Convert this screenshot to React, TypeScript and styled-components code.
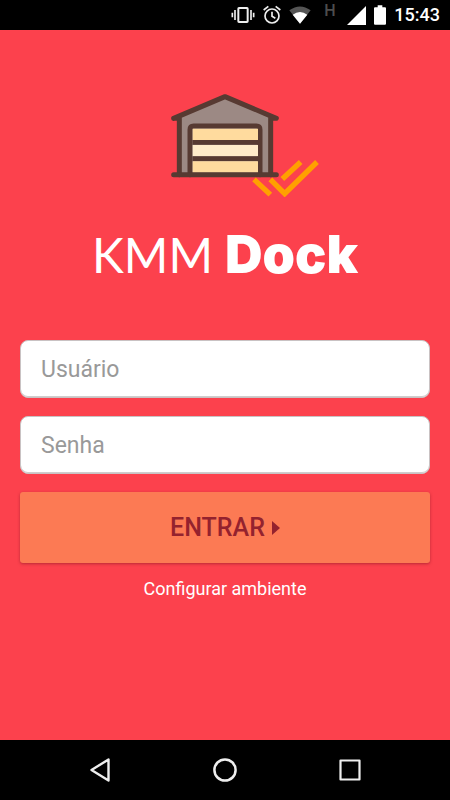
import React from "react";
import styled, { createGlobalStyle } from "styled-components";

const GlobalStyle = createGlobalStyle`
  *, *::before, *::after { box-sizing: border-box; }
  body { margin: 0; background: #fc414d; font-family: Roboto, sans-serif; }
`;

const Screen = styled.div`
  display: flex;
  flex-direction: column;
  min-height: 100vh;
  background: #fc414d;
`;

const StatusBar = styled.header`
  display: flex;
  align-items: center;
  justify-content: flex-end;
  gap: 8px;
  height: 30px;
  padding-right: 10px;
  background: #000;
  color: #fff;
`;

const StatusIcons = styled.div`
  display: flex;
  align-items: center;
  gap: 8px;
`;

const Network = styled.span`
  align-self: flex-start;
  width: 20px;
  padding-left: 5px;
  color: #4d4d4d;
  font-size: 16px;
  font-weight: 500;
  line-height: 22px;
`;

const Clock = styled.time`
  font-size: 18px;
  font-weight: 500;
  line-height: 32px;
`;

const Main = styled.main`
  display: flex;
  flex: 1;
  flex-direction: column;
  align-items: center;
  padding: 62px 20px 20px;
`;

const Brand = styled.div`
  display: flex;
  flex-direction: column;
  align-items: center;
  gap: 28px;
`;

const LogoBox = styled.div`
  padding-left: 40px;
  line-height: 0;
`;

const Title = styled.h1`
  display: flex;
  align-items: baseline;
  gap: 12px;
  height: 60px;
  margin: 0;
  color: #fff;
  font-family: Lato, sans-serif;
  font-size: 48px;
  font-weight: 400;
  line-height: 60px;
`;

const TitleStrong = styled.strong`
  font-family: Inter, sans-serif;
  font-size: 52px;
  font-weight: 900;
`;

const Form = styled.form`
  display: flex;
  flex-direction: column;
  align-items: center;
  gap: 18px;
  width: 100%;
  margin-top: 55px;
`;

const Field = styled.input`
  width: 100%;
  height: 58px;
  padding: 0 20px;
  border: 1px solid #c9c2c3;
  border-radius: 8px;
  background: #fff;
  box-shadow: inset 0 -1px #d0cccc;
  color: #333;
  font-family: Roboto, sans-serif;
  font-size: 23px;
  outline: none;

  &::placeholder {
    color: #999;
    opacity: 1;
  }
`;

const SubmitButton = styled.button`
  display: flex;
  align-items: center;
  justify-content: center;
  gap: 7px;
  width: 100%;
  height: 71px;
  padding: 0;
  border: 0;
  border-radius: 3px;
  background: #fc7a54;
  box-shadow: 0 1px 3px rgba(120, 20, 30, 0.5);
  color: #94222e;
  font-family: Roboto, sans-serif;
  font-size: 25px;
  font-weight: 500;
`;

const ConfigLink = styled.a`
  margin-top: -4px;
  color: #fff;
  font-size: 18px;
  line-height: 24px;
  text-decoration: none;
`;

const NavBar = styled.nav`
  display: flex;
  align-items: center;
  justify-content: center;
  gap: 65px;
  height: 60px;
  background: #000;
`;

const NavButton = styled.button`
  display: flex;
  align-items: center;
  justify-content: center;
  width: 60px;
  height: 60px;
  padding: 0;
  border: 0;
  background: none;
`;

function VibrateIcon() {
  return (
    <svg width="24" height="18" viewBox="0 0 72 54" fill="none" stroke="#eee" strokeWidth="5" aria-hidden="true">
      <rect x="22" y="6" width="28" height="42" rx="2" strokeWidth="6" />
      <path d="M12 12V42M60 12V42M4 20V34M68 20V34" />
    </svg>
  );
}

function AlarmIcon() {
  return (
    <svg width="18" height="20" viewBox="0 0 54 60" fill="none" stroke="#eee" strokeWidth="5" aria-hidden="true">
      <circle cx="27" cy="33" r="21" />
      <path d="M2 15L16 4M52 15L38 4M27 20V34L37 40" />
    </svg>
  );
}

function WifiIcon() {
  return (
    <svg width="22" height="18" viewBox="0 0 66 54" aria-hidden="true">
      <path d="M1 13Q33-10 65 13L33 53Z" fill="#555" />
      <path d="M11 26Q33 10 55 26L33 53Z" fill="#fff" />
    </svg>
  );
}

function SignalIcon() {
  return (
    <svg width="19" height="19" viewBox="0 0 57 57" aria-hidden="true">
      <path d="M57 0V57H0Z" fill="#fff" />
    </svg>
  );
}

function BatteryIcon() {
  return (
    <svg width="12" height="20" viewBox="0 0 36 60" aria-hidden="true">
      <path d="M11 1H25V7H33Q36 7 36 10V56Q36 59 33 59H3Q0 59 0 56V10Q0 7 3 7H11Z" fill="#fff" />
    </svg>
  );
}

function DockLogo() {
  return (
    <svg width="150" height="105" viewBox="30 20 450 315" role="img" aria-label="KMM Dock">
      <path d="M58 97L195 35L332 97V268H58Z" fill="#9c8984" />
      <g fill="none" stroke="#573a32" strokeWidth="15" strokeLinecap="round" strokeLinejoin="round">
        <path d="M41 99L195 34L349 99H332V268M41 99H58V268" />
        <path d="M90 268V133Q90 122 101 122H289Q300 122 300 133V268" />
      </g>
      <path d="M98 130H294V164H98ZM98 228H294V262H98Z" fill="#ffdb9e" />
      <path d="M98 179H294V213H98Z" fill="#ffebc9" />
      <path d="M98 171H294M98 220H294" stroke="#573a32" strokeWidth="14" />
      <path d="M41 268H349" stroke="#573a32" strokeWidth="15" strokeLinecap="round" />
      <path
        d="M282 282L331 328M331 282L374 325L471 230M367 281L422 230"
        fill="none"
        stroke="#ffa000"
        strokeWidth="16"
      />
    </svg>
  );
}

export default function App() {
  return (
    <>
      <GlobalStyle />
      <Screen>
        <StatusBar>
          <StatusIcons>
            <VibrateIcon />
            <AlarmIcon />
            <WifiIcon />
          </StatusIcons>
          <Network>H</Network>
          <SignalIcon />
          <BatteryIcon />
          <Clock>15:43</Clock>
        </StatusBar>
        <Main>
          <Brand>
            <LogoBox>
              <DockLogo />
            </LogoBox>
            <Title>
              KMM <TitleStrong>Dock</TitleStrong>
            </Title>
          </Brand>
          <Form onSubmit={(event) => event.preventDefault()}>
            <Field type="text" name="user" placeholder="Usuário" aria-label="Usuário" />
            <Field type="password" name="password" placeholder="Senha" aria-label="Senha" />
            <SubmitButton type="submit">
              ENTRAR
              <svg width="8" height="14" viewBox="0 0 8 14" aria-hidden="true">
                <path d="M0 0L8 7L0 14Z" fill="#94222e" />
              </svg>
            </SubmitButton>
            <ConfigLink href="#configurar">Configurar ambiente</ConfigLink>
          </Form>
        </Main>
        <NavBar>
          <NavButton type="button" aria-label="Voltar">
            <svg width="20" height="24" viewBox="0 0 20 24" fill="none" stroke="#eee" strokeWidth="2.4" strokeLinejoin="round" aria-hidden="true">
              <path d="M18.5 1.5V22.5L1.5 12Z" />
            </svg>
          </NavButton>
          <NavButton type="button" aria-label="Início">
            <svg width="24" height="24" viewBox="0 0 24 24" fill="none" stroke="#eee" strokeWidth="2.5" aria-hidden="true">
              <circle cx="12" cy="12" r="10.6" />
            </svg>
          </NavButton>
          <NavButton type="button" aria-label="Recentes">
            <svg width="22" height="22" viewBox="0 0 22 22" fill="none" stroke="#eee" strokeWidth="2.2" strokeLinejoin="round" aria-hidden="true">
              <rect x="1.5" y="1.5" width="19" height="19" />
            </svg>
          </NavButton>
        </NavBar>
      </Screen>
    </>
  );
}
